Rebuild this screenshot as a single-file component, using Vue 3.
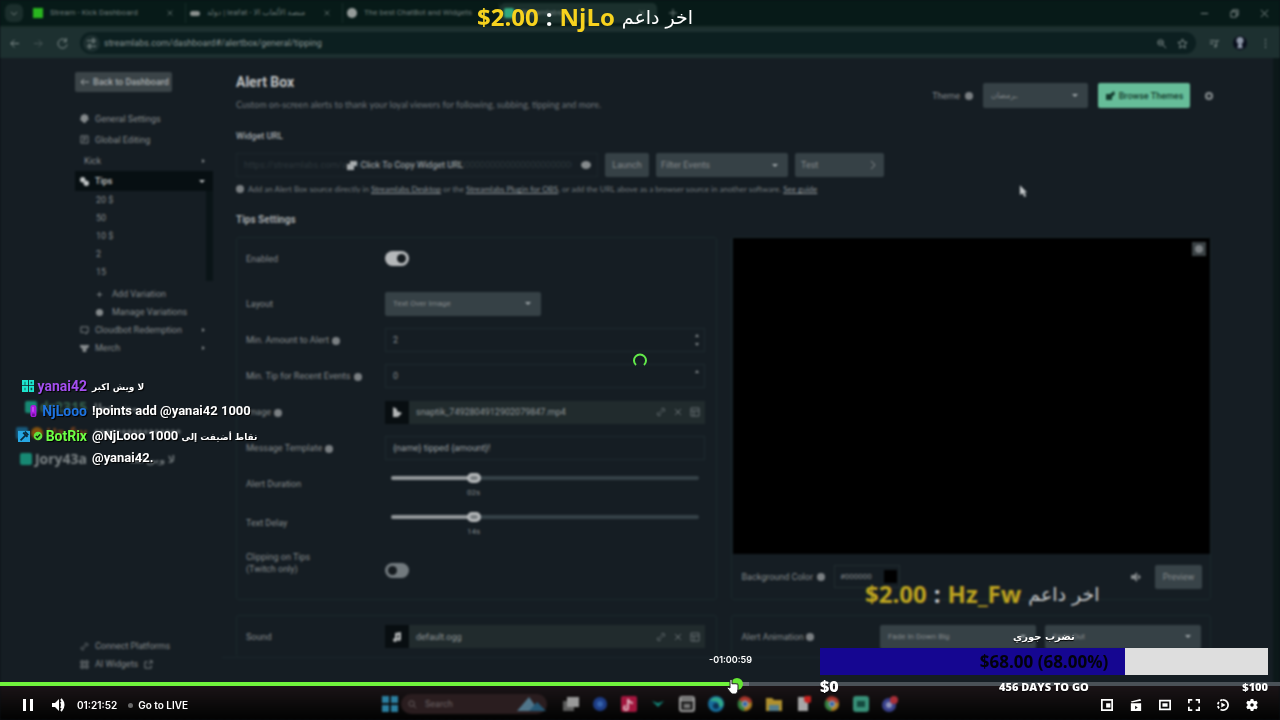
<script setup>
import { ref } from 'vue'

const tabs = [
  { kind: 'kick', title: 'Stream - Kick Dashboard' },
  { kind: 'pill', title: 'دولة | leafat - منصة الألعاب الا' },
  { kind: 'round', title: 'The best ChatBot and Widgets' },
  { kind: 'labs', title: 'Streamlabs', active: true },
]
const variations = ['20 $', '50', '10 $', '2', '15']
const apps = ['task', 'store', 'red', 'arrow', 'note', 'edge', 'chrome', 'folder', 'doc', 'chrome', 'labs', 'discord']
const played = ref(57.65)
const duration = ref(26)
const delay = ref(26)
const goal = 68
</script>

<template>
  <div class="player">
    <div class="desktop">
      <header class="tabbar">
        <button class="tabsearch" aria-label="Search tabs"><svg viewBox="0 0 10 10"><path d="M2 4l3 3 3-3" /></svg></button>
        <div v-for="t in tabs" :key="t.title" class="tab" :class="{ active: t.active }">
          <i class="fav" :class="t.kind"></i><span dir="ltr">{{ t.title }}</span>
          <svg viewBox="0 0 10 10"><path d="M2 2l6 6M8 2L2 8" /></svg>
        </div>
        <svg class="plus" viewBox="0 0 10 10"><path d="M5 1v8M1 5h8" /></svg>
        <div class="winbtns">
          <svg viewBox="0 0 10 10"><path d="M1 5h8" /></svg>
          <svg viewBox="0 0 10 10"><path d="M1 3h6v6H1zM3 3V1h6v6H7" /></svg>
          <svg viewBox="0 0 10 10"><path d="M1 1l8 8M9 1L1 9" /></svg>
        </div>
      </header>
      <div class="toolbar">
        <svg viewBox="0 0 12 12"><path d="M11 6H2M6 2L2 6l4 4" /></svg>
        <svg class="off" viewBox="0 0 12 12"><path d="M1 6h9M6 2l4 4-4 4" /></svg>
        <svg viewBox="0 0 12 12"><path d="M10 3a5 5 0 1 0 1 4M10 0v4H7" /></svg>
        <div class="address">
          <span class="site"><svg viewBox="0 0 12 12"><path d="M1 3h5M10 3h1M1 9h1M6 9h5M7 1v4h2V1zM3 7v4h2V7z" /></svg></span>
          <span class="url">streamlabs.com/dashboard#/alertbox/general/tipping</span>
          <svg viewBox="0 0 12 12"><circle cx="5" cy="5" r="3" /><path d="M7 7l4 4M3 5h4" /></svg>
          <svg viewBox="0 0 12 12"><path d="M6 1l1.500 3.500 3.500.3-2.700 2.400.8 3.800L6 9l-3.100 2 .8-3.800L1 4.800l3.500-.3z" /></svg>
        </div>
        <svg viewBox="0 0 12 12"><path d="M1 3h6M1 6h4M8 9V3h3M8 9a1 1 0 1 1-2 0 1 1 0 0 1 2 0" /></svg>
        <svg class="avatar" viewBox="0 0 16 16"><circle class="dark" cx="8" cy="8" r="8" /><circle class="hair" cx="8" cy="5" r="4" /><path class="hair" d="M6 9h4l1 5H5z" /></svg>
        <svg viewBox="0 0 12 12"><path d="M6 1v2M6 5v2M6 9v2" /></svg>
      </div>

      <div class="page">
        <nav class="side">
          <button class="back"><svg viewBox="0 0 10 10"><path d="M9 5H1M4 2L1 5l3 3" /></svg>Back to Dashboard</button>
          <a href="#" class="item"><svg viewBox="0 0 10 10" class="fill"><path d="M4 0h2l.5 1.500L8.500 1l.7 1.500L8.500 4l1.300 1-.6 2-1.700.2L6.500 9.800H3.500L2.500 8 .6 7.200.2 5l1-1L.8 2.500 2 1.200l1.500.3z" /></svg>General Settings</a>
          <a href="#" class="item"><svg viewBox="0 0 10 10"><path d="M1 1h8v8H1zM3 3h4M3 5h4M3 7h2" /></svg>Global Editing</a>
          <a href="#" class="item kick">Kick<b class="caret right"></b></a>
          <a href="#" class="item tips"><svg viewBox="0 0 10 10" class="fill"><circle cx="3" cy="3" r="3" /><circle cx="7" cy="7" r="3" /></svg>Tips<b class="caret"></b></a>
          <div class="subs">
            <a v-for="v in variations" :key="v" href="#">{{ v }}</a>
          </div>
          <a href="#" class="item sub"><svg viewBox="0 0 10 10"><path d="M5 2v6M2 5h6" /></svg>Add Variation</a>
          <a href="#" class="item sub"><svg viewBox="0 0 10 10" class="fill"><circle cx="5" cy="5" r="4" /></svg>Manage Variations</a>
          <a href="#" class="item short"><svg viewBox="0 0 10 10"><path d="M1 1h8v6H7v2L5 7H1z" /></svg>Cloudbot Redemption<b class="caret right"></b></a>
          <a href="#" class="item short"><svg viewBox="0 0 10 10" class="fill"><path d="M0 1h10v2L7 6v3H3V6L0 3z" /></svg>Merch<b class="caret right"></b></a>
          <a href="#" class="item short bottom"><svg viewBox="0 0 10 10"><path d="M4 6l2-2M5 3l2-2 2 2-2 2M5 7L3 9 1 7l2-2" /></svg>Connect Platforms</a>
          <a href="#" class="item short"><svg viewBox="0 0 10 10"><path d="M1 1h3v3H1zM6 1h3v3H6zM1 6h3v3H1zM6 6h3v3H6z" /></svg>AI Widgets <svg viewBox="0 0 10 10"><path d="M4 2H1v7h7V6M5 5l4-4M6 1h3v3" /></svg></a>
        </nav>

        <main>
          <div class="head">
            <div class="titles">
              <h1>Alert Box</h1>
              <p>Custom on-screen alerts to thank your loyal viewers for following, subbing, tipping and more.</p>
            </div>
            <div class="theme">
              <label for="theme">Theme</label><i class="info"></i>
              <span class="sel"><select id="theme"><option>ـرمضان</option></select></span>
              <button class="browse"><svg viewBox="0 0 10 10"><path d="M1 3h6v6H1zM5 3l4-3 1 3-3 3z" /></svg>Browse Themes</button>
              <i class="info gear"></i>
            </div>
          </div>
          <label class="cap" for="wurl">Widget URL</label>
          <div class="urlrow">
            <div class="urlbox">
              <input id="wurl" type="text" value="https://streamlabs.com/alert-box/v3/000000000000000000000000000000000000000" readonly>
              <span class="copy"><svg viewBox="0 0 10 10" class="fill"><path d="M0 4h3V1h7v5H7v4H0z" /></svg>Click To Copy Widget URL</span>
              <svg class="eye fill" viewBox="0 0 10 10"><ellipse cx="5" cy="5" rx="5" ry="4" /></svg>
            </div>
            <button class="launch">Launch</button>
            <span class="sel filter"><select aria-label="Filter Events"><option>Filter Events</option></select></span>
            <button class="test">Test<svg viewBox="0 0 10 10"><path d="M3 1l4 4-4 4" /></svg></button>
          </div>
          <p class="note"><i class="info"></i><span>Add an Alert Box source directly in <a href="#">Streamlabs Desktop</a> or the <a href="#">Streamlabs Plugin for OBS</a>, or add the URL above as a browser source in another software. <a href="#">See guide</a></span></p>
          <h2>Tips Settings</h2>

          <div class="panels">
            <section class="panel form">
              <div class="row first"><label for="en">Enabled</label><input id="en" class="toggle" type="checkbox" checked></div>
              <div class="row layout"><label for="lay">Layout</label><span class="sel"><select id="lay"><option>Text Over Image</option></select></span></div>
              <div class="row"><label for="amt">Min. Amount to Alert <i class="info"></i></label><div class="num"><input id="amt" value="2"><b class="caret up"></b><b class="caret"></b></div></div>
              <div class="row"><label for="rec">Min. Tip for Recent Events <i class="info"></i></label><div class="num"><input id="rec" value="0"><b class="caret up"></b><b class="caret clear"></b></div></div>
              <div class="row"><span>Image <i class="info"></i></span>
                <div class="file"><span class="thumb"><svg viewBox="0 0 10 10" class="fill"><path d="M1 0l4 2v2l5 2-4 4H1z" /></svg></span><span class="name">snaptik_7492804912902079847.mp4</span>
                  <svg viewBox="0 0 10 10"><path d="M4 6l2-2M5 3l2-2 2 2-2 2M5 7L3 9 1 7l2-2" /></svg><svg viewBox="0 0 10 10"><path d="M2 2l6 6M8 2L2 8" /></svg><svg viewBox="0 0 10 10"><path d="M1 1h8v8H1zM1 4h8M4 4v5" /></svg></div></div>
              <div class="row"><label for="tpl">Message Template <i class="info"></i></label><input id="tpl" class="text" value="{name} tipped {amount}!"></div>
              <div class="row slide"><label for="dur">Alert Duration</label><div class="slider"><input id="dur" v-model="duration" type="range" :style="{ '--v': duration + '%' }"><span>02s</span></div></div>
              <div class="row slide"><label for="del">Text Delay</label><div class="slider"><input id="del" v-model="delay" type="range" :style="{ '--v': delay + '%' }"><span>14s</span></div></div>
              <div class="row clip"><label for="clip">Clipping on Tips<br>(Twitch only)</label><input id="clip" class="toggle" type="checkbox"></div>
            </section>
            <section class="panel">
              <div class="screen"><button aria-label="Expand"><i class="info"></i></button></div>
              <div class="pfoot"><label for="bg">Background Color</label><i class="info"></i>
                <span class="color"><input id="bg" value="#000000"><i></i></span>
                <svg class="speak fill" viewBox="0 0 10 10"><path d="M0 3h3l3-3v10L3 7H0zM7 2l3 3-3 3z" /></svg><button>Preview</button></div>
            </section>
            <section class="panel second">
              <div class="row"><span>Sound</span>
                <div class="file"><span class="thumb"><svg viewBox="0 0 10 10" class="fill"><path d="M3 1l6-1v7a2 2 0 1 1-2-2V3L5 4v4a2 2 0 1 1-2-2z" /></svg></span><span class="name">default.ogg</span>
                  <svg viewBox="0 0 10 10"><path d="M4 6l2-2M5 3l2-2 2 2-2 2M5 7L3 9 1 7l2-2" /></svg><svg viewBox="0 0 10 10"><path d="M2 2l6 6M8 2L2 8" /></svg><svg viewBox="0 0 10 10"><path d="M1 1h8v8H1zM1 4h8M4 4v5" /></svg></div></div>
            </section>
            <section class="panel second anim">
              <label for="an">Alert Animation <i class="info"></i></label>
              <span class="sel"><select id="an"><option>Fade In Down Big</option></select></span>
              <span class="sel"><select aria-label="Out animation"><option>Fade Out</option></select></span>
            </section>
          </div>
        </main>
      </div>

      <footer class="taskbar">
        <svg class="win" viewBox="0 0 16 16"><path d="M0 0h7v7H0zM9 0h7v7H9zM0 9h7v7H0zM9 9h7v7H9z" /></svg>
        <div class="search"><svg viewBox="0 0 10 10"><circle cx="4" cy="4" r="3" /><path d="M6 6l3 3" /></svg>Search<svg class="hill" viewBox="0 0 30 16"><path class="h1" d="M0 15L12 1l10 14z" /><path class="h2" d="M12 15l8-9 9 9z" /></svg></div>
        <svg v-for="(a, i) in apps" :key="i" class="app" viewBox="0 0 16 16">
          <template v-if="a === 'task'"><path fill="#5c5c5c" d="M0 5h11v10H0z" /><path fill="#999" d="M4 1h12v10H4z" /></template>
          <template v-else-if="a === 'store'"><circle cx="8" cy="8" r="7" fill="#1d3c85" /><circle cx="8" cy="8" r="3" fill="#3562ac" /></template>
          <template v-else-if="a === 'red'"><rect width="16" height="16" rx="2" fill="#a3163e" /><path d="M7 12a2 2 0 1 1-2-2M7 12V3c1 3 2 4 5 4" fill="none" stroke="#d9aeb9" stroke-width="2" /></template>
          <path v-else-if="a === 'arrow'" d="M2 5l6 6 6-6-6 2z" fill="#128074" />
          <template v-else-if="a === 'note'"><rect x="1" y="1" width="14" height="14" rx="2" fill="#252525" stroke="#a0a0a0" stroke-width="2" /><path d="M1 4h14" stroke="#a0a0a0" stroke-width="2" /><path d="M5 8h6v4H5z" fill="#777" /></template>
          <template v-else-if="a === 'edge'"><circle cx="8" cy="8" r="8" fill="#176d9a" /><path d="M2 5a7 7 0 0 1 13 5c-2 2-6 1-5-2s-5-3-8-3" fill="#31a98a" /><circle cx="8" cy="10" r="3" fill="#0c3155" /></template>
          <template v-else-if="a === 'chrome'"><circle cx="8" cy="8" r="7" fill="#ad7f23" /><path d="M8 8L2 4a7 7 0 0 1 13 2z" fill="#a8362c" /><path d="M8 8l-6-4a7 7 0 0 0 5 11z" fill="#33803f" /><circle cx="8" cy="8" r="3" fill="#3567a8" stroke="#b8b8b8" /></template>
          <template v-else-if="a === 'folder'"><path d="M0 2h6l2 2h8v11H0z" fill="#b0902e" /><path d="M3 9h10v6H3z" fill="#537d8d" /></template>
          <template v-else-if="a === 'doc'"><path d="M3 1h10v14H3z" fill="#a7a7a7" /><circle cx="13" cy="3" r="4" fill="#c5211e" /></template>
          <template v-else-if="a === 'labs'"><rect width="16" height="16" rx="3" fill="#389078" /><path d="M4 5h8v6H4z" fill="#14493e" /></template>
          <template v-else><circle cx="7" cy="9" r="7" fill="#3a428d" /><circle cx="7" cy="9" r="3" fill="#8f94bb" /><circle cx="12" cy="4" r="4" fill="#a92f38" /></template>
        </svg>
      </footer>

      <div class="ghosts">
        <span class="name g1"><i></i>dr2315</span><span dir="rtl">مش خطا</span>
        <span class="name g2"><i></i><i class="coin"></i>Hz_fw</span><span>****************</span>
        <span class="name g3"><i></i>Jory43a</span><span class="late">لا وين لقا</span>
      </div>
      <p class="tipper old"><b>$2.00</b> <strong>:</strong> <b>Hz_Fw</b> <span dir="rtl">اخر داعم</span></p>
      <svg class="mouse" viewBox="0 0 10 14"><path d="M1 0v11l3-2 2 4 2-1-2-4h3z" /></svg>
    </div>

    <p class="tipper"><b>$2.00</b> <strong>:</strong> <b>NjLo</b> <span dir="rtl">اخر داعم</span></p>

    <div class="chat">
      <span class="name" style="--c: #a44ff0"><svg viewBox="0 0 14 14"><path fill="#1ee6cf" d="M0 0h7v6H0zM8 0h6v6H8zM0 7h7v7H0zM8 7h6v7H8z" /><path fill="#08554e" d="M3 2h1v4H3zM10 2h2v2h-2zM3 9h1v3H3zM10 9h2v3h-2z" /></svg>yanai42</span>
      <span class="msg"><bdi dir="rtl" class="ar">لا ويش اكبر</bdi></span>
      <span class="name" style="--c: #1e73e0"><svg viewBox="0 0 14 14"><rect x="4" width="7" height="14" rx="3" fill="#a81be0" /><path fill="#c94df5" d="M6 2h2v6H6z" /><path fill="#690f96" d="M6 10h3v3H6z" /></svg>NjLooo</span>
      <span class="msg">!points add @yanai42 1000</span>
      <span class="name" style="--c: #6dff45"><svg viewBox="0 0 14 14"><path fill="#27a7e3" d="M0 1h14v13H0z" /><path d="M3 12l6-6M6 3l5 5M8 2l4 4" stroke="#092a3c" stroke-width="2" /></svg><svg class="check" viewBox="0 0 14 14"><circle cx="7" cy="7" r="6" fill="#60e43d" /><path d="M4 7l2 2 4-4" fill="none" stroke="#0c2b09" stroke-width="2" /></svg>BotRix</span>
      <span class="msg">@NjLooo 1000 <bdi dir="rtl" class="ar">نقاط أضيفت إلى</bdi><br>@yanai42.</span>
    </div>

    <svg class="spinner" viewBox="0 0 14 14"><path d="M3 12a6 6 0 1 1 8 0" /></svg>

    <section class="goal">
      <p class="ar goaltitle" dir="rtl">نضرب جوري</p>
      <div class="bar"><div class="fillbar" :style="{ width: goal + '%' }"></div><span>$68.00 (68.00%)</span></div>
      <div class="marks"><b>$0</b><b>456 DAYS TO GO</b><b>$100</b></div>
    </section>

    <div class="controls">
      <input v-model="played" class="seek" type="range" min="0" max="100" step="any" aria-label="Seek" :style="{ '--v': played + '%' }">
      <div class="buttons">
        <button aria-label="Pause"><svg viewBox="0 0 14 14"><path d="M2 1h3v12H2zM9 1h3v12H9z" /></svg></button>
        <button class="vol" aria-label="Volume"><svg viewBox="0 0 14 14"><path d="M1 5h3l4-4v12L4 9H1z" /><path class="line" d="M10 4q2 3 0 6M10 1q5 6 0 12" /></svg></button>
        <span class="time">01:21:52</span>
        <button class="live"><i></i>Go to LIVE</button>
        <div class="right">
          <button aria-label="Mini player"><svg viewBox="0 0 14 14"><path class="line" d="M1 1h12v12H1z" /><path d="M6 5h5v5H6z" /></svg></button>
          <button aria-label="Clip"><svg viewBox="0 0 14 14"><path d="M1 5h12v9H1zM1 3l11-3 1 2L2 4z" /><path class="cut" d="M6 8l3 2-3 2z" /></svg></button>
          <button aria-label="Theatre mode"><svg viewBox="0 0 14 14"><path class="line" d="M1 2h12v10H1z" /><path d="M4 5h6v4H4z" /></svg></button>
          <button aria-label="Fullscreen"><svg viewBox="0 0 14 14"><path class="line" d="M1 5V1h4M9 1h4v4M13 9v4H9M5 13H1V9" /></svg></button>
          <button aria-label="Playback speed"><svg viewBox="0 0 14 14"><path class="line" d="M7 1a6 6 0 0 1 0 12" /><path class="line dash" d="M7 13A6 6 0 0 1 7 1" /><path d="M5 4l5 3-5 3z" /></svg></button>
          <button aria-label="Settings"><svg viewBox="0 0 14 14"><path fill-rule="evenodd" d="M5.500 0h3l.5 2 1.200.7 2-.6 1.500 2.600-1.500 1.600v1.400l1.500 1.600-1.500 2.600-2-.6L9 12l-.5 2h-3L5 12l-1.200-.7-2 .6L.3 9.300 1.800 7.700V6.300L.3 4.700l1.500-2.600 2 .6L5 2zM7 5a2 2 0 1 0 0 4 2 2 0 0 0 0-4z" /></svg></button>
        </div>
      </div>
    </div>
    <span class="tip">-01:00:59</span>
    <svg class="hand" viewBox="0 0 14 16"><path d="M4 8V2q1-2 2 0v4q1-1 2 0 1-1 2 0 2-1 2 1v4q0 3-2 5H6q-2-2-5-6 0-2 3 0z" /></svg>
  </div>
</template>

<style>
html, body { margin: 0; background: #0b1115; }
</style>

<style scoped>
* { box-sizing: border-box; }
.player { position: relative; min-height: 100vh; overflow: hidden; color: #fff; font-family: Roboto, "DejaVu Sans", sans-serif; display: flex; }
button, input, select { font: inherit; color: inherit; border: 0; margin: 0; padding: 0; background: none; min-width: 0; }
a { color: inherit; text-decoration: none; }
p, h1, h2 { margin: 0; }
svg { fill: none; stroke: currentColor; width: 10px; height: 10px; flex: none; }
svg.fill { fill: currentColor; stroke: none; }
.desktop { position: relative; flex: 1; min-width: 0; display: flex; flex-direction: column; background: #151d23; filter: blur(1px); font-size: 9px; line-height: 12px; color: #868b8d; white-space: nowrap; }

.tabbar { height: 28px; background: #071a18; display: flex; align-items: center; color: #6f7d7a; border-bottom: 2px solid #1b2e2b; font-size: 8px; }
.tabsearch { width: 18px; height: 18px; margin: 0 6px 0 5px; border-radius: 6px; background: #1b2e2c; display: grid; place-items: center; }
.tab { flex: 0 1 157px; height: 20px; display: flex; align-items: center; gap: 7px; padding: 0 11px 0 4px; min-width: 0; border-right: 1px solid #172d29; }
.tab.active { background: #1b302d; border-radius: 5px; border: 0; }
.tab span { flex: 1; }
.tab svg { width: 8px; height: 8px; }
.fav { width: 10px; height: 10px; flex: none; background: #29b51f; }
.fav.pill { height: 5px; border-radius: 3px; background: #8b918f; }
.fav.round { border-radius: 5px; background: #959c9a; }
.fav.labs { background: #31a77f; border-radius: 2px; }
.plus { margin-left: 11px; }
.winbtns { margin: 0 11px 0 auto; display: flex; gap: 21px; color: #8c9695; }
.winbtns svg { width: 9px; height: 9px; }
.toolbar { height: 30px; background: #1d3030; display: flex; align-items: center; padding: 0 9px; gap: 13px; color: #8b9796; }
.toolbar svg { width: 11px; height: 11px; }
.toolbar .off { color: #4b5a5a; }
.address { flex: 1; height: 22px; border-radius: 11px; background: #0c1f20; display: flex; align-items: center; gap: 10px; padding: 0 8px 0 2px; margin-left: -1px; }
.site { width: 17px; height: 17px; margin-left: 1px; border-radius: 9px; background: #1d2f30; display: grid; place-items: center; margin-right: -6px; }
.url { flex: 1; }
.toolbar .avatar { width: 14px; height: 14px; stroke: none; }
.avatar .dark { fill: #080d1c; }
.avatar .hair { fill: #8d97a8; }

.page { flex: 1; min-height: 0; display: flex; border-right: 7px solid #0c1819; }
.side { width: 213px; padding: 14px 0 11px 75px; display: flex; flex-direction: column; flex: none; }
.back { width: 97px; height: 20px; margin-bottom: 16px; border-radius: 2px; background: #3b4448; color: #a7acae; display: flex; align-items: center; gap: 3px; padding: 0 5px; font-weight: 500; }
.item { height: 21px; flex: none; display: flex; align-items: center; gap: 6px; padding: 0 8px 0 5px; }
.item svg { width: 9px; height: 9px; }
.item .caret { margin-left: auto; }
.kick { padding-left: 9px; }
.tips { height: 20px; background: #070f12; color: #c0c4c5; font-weight: 500; }
.short, .sub { height: 18px; }
.sub { padding-left: 20px; gap: 8px; }
.bottom { margin-top: auto; }
.subs { display: flex; flex-direction: column; margin-bottom: 4px; border-right: 7px solid #0a1417; }
.subs a { height: 18px; line-height: 18px; padding-left: 21px; }
.caret { width: 0; height: 0; border: 3px solid transparent; border-top-color: currentColor; border-bottom: 0; }
.caret.right { border: 2px solid transparent; border-left: 3px solid currentColor; border-right: 0; }
.caret.up { border: 2px solid transparent; border-bottom: 3px solid currentColor; border-top: 0; }

main { flex: 1; min-width: 0; padding: 14px 62px 0 23px; }
.head { display: flex; justify-content: space-between; margin-bottom: 19px; }
h1 { font-size: 14px; line-height: 20px; color: #c0c3c4; margin-bottom: 7px; }
.titles p { color: #70777b; font-family: Lato, sans-serif; }
.theme { display: flex; align-items: center; gap: 5px; height: 25px; margin: 11px -2px 0 0; }
.theme .sel { width: 105px; height: 25px; margin: 0 5px; }
.info { display: inline-block; flex: none; width: 8px; height: 8px; border-radius: 4px; background: #7c8184; vertical-align: middle; }
.theme .gear { background: #1d262b; border: 2px solid #888e90; margin-left: 10px; }
.browse { height: 25px; width: 92px; border-radius: 2px; background: #66bd99; color: #143c2e; font-weight: 500; display: flex; align-items: center; justify-content: center; gap: 4px; }
.browse svg { fill: currentColor; stroke: none; }
.cap { display: block; margin-bottom: 11px; color: #a5aaac; font-weight: 500; }
.urlrow { display: flex; height: 24px; gap: 7px; }
.urlbox { position: relative; flex: 0 1 362px; display: flex; border: 1px solid #1c272c; }
.urlbox input { width: 328px; margin: 0 7px; color: #2e383d; }
.copy { position: absolute; inset: 0; display: flex; align-items: center; justify-content: center; gap: 4px; color: #a8adaf; padding-right: 24px; }
.eye { position: absolute; right: 6px; top: 6px; }
.launch, .test { background: #364146; border-radius: 2px; width: 44px; }
.test { width: 89px; display: flex; justify-content: space-between; align-items: center; padding: 0 6px; }
.sel { display: grid; align-items: center; background: #364146; border-radius: 2px; height: 24px; }
.sel select { grid-area: 1 / 1; appearance: none; height: 100%; width: 100%; padding: 0 8px; font-size: 8px; }
.sel::after { content: ""; grid-area: 1 / 1; justify-self: end; margin-right: 10px; border: 3px solid transparent; border-top: 3px solid #a2a9ac; border-bottom: 0; pointer-events: none; }
.filter { width: 132px; }
.filter select { padding: 0 5px; font-size: 9px; }
.note { display: flex; align-items: center; gap: 4px; margin: 6px 0 17px; font-size: 8px; color: #747a7d; font-family: Lato, sans-serif; }
.note a { text-decoration: underline; color: #90979a; }
h2 { font-size: 10px; line-height: 16px; color: #a4a8aa; font-weight: 700; margin-bottom: 9px; }
.panels { display: grid; grid-template-columns: 1fr 1fr; column-gap: 14px; row-gap: 15px; border-bottom: 1px solid #1a262b; margin-left: -14px; padding-left: 14px; }
.panel { border: 1px solid #1b282c; border-radius: 3px; min-width: 0; }
.form { padding: 0 0 12px; }
.row { height: 36px; display: grid; grid-template-columns: 139px 1fr; align-items: center; padding: 0 11px 0 9px; }
.row .info { margin-left: 1px; }
.first { height: 47px; padding-bottom: 6px; }
.layout { height: 37px; }
.layout .sel { width: 156px; }
.slide { height: 39px; }
.slide label { padding-bottom: 3px; }
.clip { height: 40px; }
.clip label { padding-bottom: 2px; }
.clip .toggle { margin-top: 12px; }
.toggle { appearance: none; width: 24px; height: 15px; border-radius: 8px; background: #727a7e; display: flex; align-items: center; padding: 0 3px; }
.toggle::before { content: ""; width: 9px; height: 9px; border-radius: 5px; background: #151b1f; }
.toggle:checked { background: #b5b8ba; justify-content: flex-end; }
.num, .text { height: 24px; border: 1px solid #1e2a2e; padding: 0 7px; width: 100%; color: #9ca1a3; }
.num { display: grid; grid-template-columns: 1fr auto; align-content: center; row-gap: 6px; padding-right: 5px; color: #858b8e; }
.num input { grid-row: 1 / 3; }
.num .caret { border-left-width: 2px; border-right-width: 2px; }
.num .clear { visibility: hidden; }
.file { height: 23px; display: flex; align-items: center; gap: 7px; padding-right: 5px; background: #212b2d; color: #697174; }
.thumb { width: 24px; height: 100%; background: #080e11; color: #b4b7b8; display: grid; place-items: center; }
.slider { display: grid; gap: 3px; padding: 0 6px; }
.slider input { appearance: none; width: 100%; height: 12px; }
.slider input::-webkit-slider-runnable-track { height: 4px; border-radius: 2px; background: linear-gradient(to right, #92979a var(--v), #354147 var(--v)); }
.slider input::-webkit-slider-thumb { appearance: none; width: 14px; height: 10px; margin-top: -3px; border-radius: 5px; background: #b5b8ba; border: 3px solid #b5b8ba; box-shadow: inset 0 0 0 2px #777d80; }
.slider span { width: 165px; text-align: center; font-size: 8px; }
.screen { background: #000; height: 316px; margin: 0 0 0 1px; display: flex; justify-content: flex-end; padding: 4px; }
.screen button { width: 14px; height: 14px; background: #3a4144; display: grid; place-items: center; }
.pfoot { height: 45px; display: flex; align-items: center; gap: 4px; padding: 0 8px 0 10px; }
.pfoot button { width: 47px; height: 24px; background: #384348; border-radius: 2px; }
.color { display: flex; align-items: center; border: 1px solid #212c30; height: 23px; width: 66px; margin-left: 5px; padding: 0 2px 0 5px; font-size: 8px; }
.color input { width: 44px; }
.color i { width: 13px; height: 13px; background: #000; }
.speak { margin: 0 10px 0 auto; }
.second { height: 42px; border-bottom: 0; display: grid; align-items: center; }
.anim { grid-template-columns: 1fr 156px 156px; gap: 9px; padding: 0 9px 0 10px; }

.taskbar { height: 36px; display: flex; align-items: center; justify-content: flex-start; gap: 13px; padding: 4px 0 0 30%; background: linear-gradient(#1c1518, #090808 70%, #020202); }
.taskbar svg { width: 16px; height: 16px; stroke: none; }
.taskbar .win { fill: #2b7fa0; margin-left: -2px; }
.search { width: 146px; height: 20px; margin: 0 3px 0 -10px; border-radius: 10px; background: #2a1d1f; display: flex; align-items: center; gap: 8px; padding-left: 7px; color: #6c6465; }
.search svg:first-child { width: 9px; height: 9px; stroke: currentColor; }
.search .hill { width: 30px; margin-left: auto; }
.h1 { fill: #50758a; } .h2 { fill: #255774; }

.ghosts { position: absolute; left: 0; top: 398px; display: grid; grid-template-columns: 87px auto; column-gap: 7px; row-gap: 8px; line-height: 18px; font-size: 14px; font-weight: 700; font-family: "Open Sans", "DejaVu Sans", sans-serif; color: #697073; }
.ghosts span:not(.name) { font-size: 10px; text-align: left; }
.ghosts .name, .chat .name { display: flex; align-items: center; justify-content: flex-end; gap: 3px; }
.file .name { flex: 1; color: #909698; }
.ghosts i { width: 12px; height: 12px; background: #178873; border-radius: 2px; }
.g1 { color: #35614f; } .g2 { color: #75401c; } .g3 { color: #7e8587; }
.g2 { margin-left: -8px; }
.g2 i { background: #17587a; } .ghosts .coin { background: #84520f; border-radius: 6px; }
.ghosts .late { padding-left: 35px; }
.mouse { position: absolute; left: 1019px; top: 185px; width: 9px; height: 13px; fill: #c4c8ca; stroke: none; }

.tipper { position: absolute; top: 0; left: 477px; display: flex; align-items: center; gap: 7px; font-family: "Open Sans", "DejaVu Sans", sans-serif; font-size: 24px; line-height: 34px; white-space: nowrap; color: #fff; }
.tipper b { color: #f7d21e; }
.tipper span { font-family: "DejaVu Sans", sans-serif; font-size: 19px; }
.tipper.old { top: 577px; left: 865px; opacity: .75; }

.chat { position: absolute; left: 0; top: 375px; display: grid; grid-template-columns: 87px auto; column-gap: 5px; row-gap: 3px; font-size: 13px; line-height: 22px; font-weight: 700; white-space: nowrap; text-shadow: 1px 1px 1px #000; }
.chat .name { color: var(--c); height: 22px; font-size: 14px; }
.chat .name svg { width: 12px; height: 12px; stroke: none; }
.chat .name .check { width: 10px; height: 10px; }
.msg .ar { font-size: 9px; }
.ar { font-family: "DejaVu Sans", sans-serif; font-size: 10px; line-height: 16px; }
.spinner { position: absolute; left: 633px; top: 353px; width: 14px; height: 14px; stroke: #62e94a; stroke-width: 2; }

.goal { position: absolute; right: 12px; top: 629px; width: 35%; font-family: "Open Sans", sans-serif; z-index: 2; pointer-events: none; }
.goaltitle { text-align: center; font-weight: 700; text-shadow: 0 1px 1px #000; margin-bottom: 3px; }
.bar { height: 27px; background: #dedede; display: grid; align-items: center; }
.fillbar { grid-area: 1 / 1; height: 100%; background: #150691; }
.bar span { grid-area: 1 / 1; text-align: center; font-size: 17px; font-weight: 700; color: #02020c; }
.marks { display: grid; grid-template-columns: 1fr auto 1fr; align-items: center; height: 22px; font-size: 11px; font-weight: 800; text-shadow: 0 1px 1px #000; }
.marks b:first-child { font-size: 16px; }
.marks b:last-child { text-align: right; }

.controls { position: absolute; left: 0; right: 0; bottom: 0; }
.seek { display: block; appearance: none; width: 100%; height: 12px; }
.seek::-webkit-slider-runnable-track { height: 4px; background: linear-gradient(to right, #70f33c var(--v), #707479 var(--v), #707479 58.500%, #4a5157 58.500%); }
.seek::-webkit-slider-thumb { appearance: none; width: 12px; height: 12px; margin-top: -4px; border-radius: 6px; background: #65e633; }
.buttons { height: 30px; padding: 0 22px 0 21px; display: flex; align-items: center; font-family: Inter, sans-serif; font-size: 10px; font-weight: 600; }
.buttons svg { display: block; width: 14px; height: 14px; fill: #fff; stroke: none; }
.buttons .line { fill: none; stroke: #fff; stroke-width: 2; }
.buttons .dash { stroke-dasharray: 3 2; }
.buttons .cut { fill: #111; }
.vol { margin: 0 12px 0 16px; }
.live { display: flex; align-items: center; gap: 5px; margin-left: 11px; }
.live i { width: 5px; height: 5px; border-radius: 3px; background: #686868; }
.right { display: flex; gap: 17px; margin-left: auto; }
.right svg { width: 12px; height: 12px; }
.tip { position: absolute; left: 709px; top: 654px; font-family: Inter, sans-serif; font-size: 9px; line-height: 12px; font-weight: 600; }
.hand { position: absolute; left: 726px; top: 678px; width: 14px; height: 16px; fill: #fff; stroke: #222; z-index: 3; }
</style>
